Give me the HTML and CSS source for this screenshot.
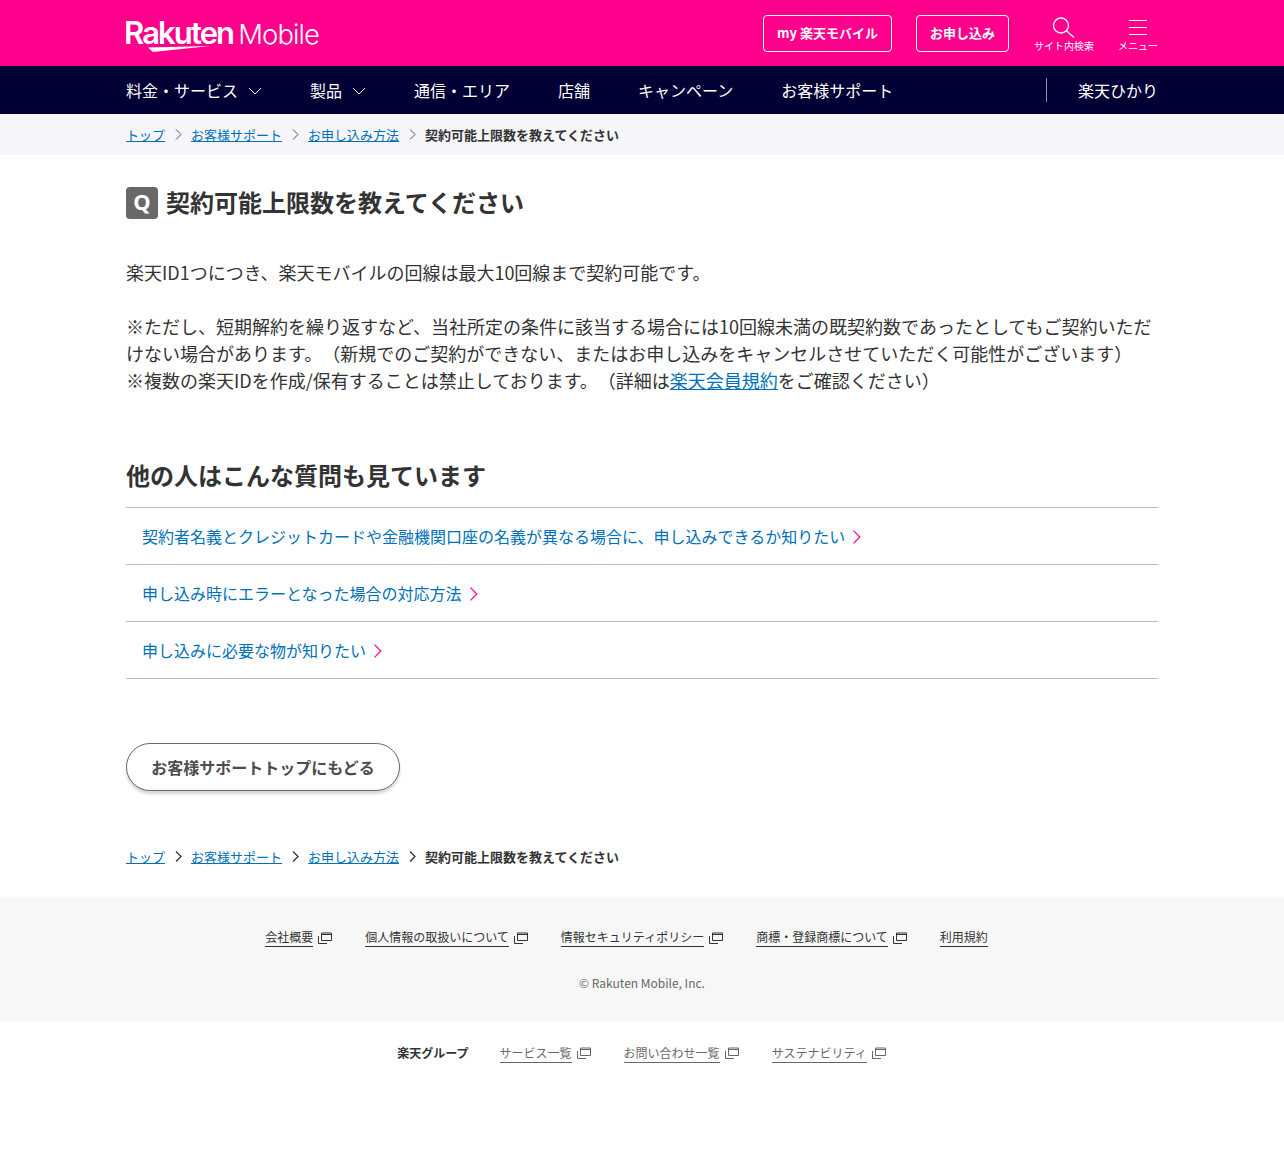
FILE: index.html
```html
<!DOCTYPE html>
<html lang="ja">
<head>
<meta charset="utf-8">
<title>契約可能上限数を教えてください</title>
<link rel="stylesheet" href="styles.css">
</head>
<body>
<header class="top">
  <div class="wrap top-in">
    <a class="logo" href="#"><span class="logo-r">Rakuten</span><span class="logo-m">Mobile</span>
      <svg class="swoosh" width="62" height="6" viewBox="0 0 62 6"><path d="M0 1.500 L62 0 L5 6 Z" fill="#fff"/></svg>
    </a>
    <div class="top-actions">
      <a class="tbtn tbtn-my" href="#">my 楽天モバイル</a>
      <a class="tbtn tbtn-apply" href="#">お申し込み</a>
      <a class="ticon ticon-search" href="#">
        <svg width="24" height="24" viewBox="0 0 24 24" fill="none" stroke="#fff" stroke-width="1.300"><circle cx="9" cy="11.500" r="7.500"/><path d="M14.500 17l7.500 6.500"/></svg>
        <span>サイト内検索</span>
      </a>
      <a class="ticon" href="#">
        <svg width="24" height="24" viewBox="0 0 24 24" fill="none" stroke="#fff" stroke-width="1.200"><path d="M3 6.500h18M3 13.500h18M3 20.500h18"/></svg>
        <span>メニュー</span>
      </a>
    </div>
  </div>
</header>
<nav class="gnav">
  <div class="wrap gnav-in">
    <a href="#">料金・サービス<svg class="chev" width="14" height="8" viewBox="0 0 14 8" fill="none" stroke="#fff"><path d="M1 1l6 6 6-6"/></svg></a>
    <a href="#">製品<svg class="chev" width="14" height="8" viewBox="0 0 14 8" fill="none" stroke="#fff"><path d="M1 1l6 6 6-6"/></svg></a>
    <a href="#">通信・エリア</a>
    <a href="#">店舗</a>
    <a href="#">キャンペーン</a>
    <a href="#">お客様サポート</a>
    <a class="gnav-hikari" href="#">楽天ひかり</a>
  </div>
</nav>
<div class="crumb-bar">
  <ol class="wrap crumbs">
    <li><a href="#">トップ</a></li>
    <li class="sep"><svg width="7" height="11" viewBox="0 0 7 11" fill="none" stroke="#555"><path d="M1 .5l5 5-5 5"/></svg></li>
    <li><a href="#">お客様サポート</a></li>
    <li class="sep"><svg width="7" height="11" viewBox="0 0 7 11" fill="none" stroke="#555"><path d="M1 .5l5 5-5 5"/></svg></li>
    <li><a href="#">お申し込み方法</a></li>
    <li class="sep"><svg width="7" height="11" viewBox="0 0 7 11" fill="none" stroke="#555"><path d="M1 .5l5 5-5 5"/></svg></li>
    <li class="cur">契約可能上限数を教えてください</li>
  </ol>
</div>
<main class="wrap">
  <h1 class="q-title"><span class="q-mark">Q</span>契約可能上限数を教えてください</h1>
  <div class="answer">
    <p>楽天ID1つにつき、楽天モバイルの回線は最大10回線まで契約可能です。</p>
    <p>※ただし、短期解約を繰り返すなど、当社所定の条件に該当する場合には10回線未満の既契約数であったとしてもご契約いただけない場合があります。（新規でのご契約ができない、またはお申し込みをキャンセルさせていただく可能性がございます）<br>※複数の楽天IDを作成/保有することは禁止しております。（詳細は<a href="#">楽天会員規約</a>をご確認ください）</p>
  </div>
  <h2 class="rel-title">他の人はこんな質問も見ています</h2>
  <ul class="rel-list">
    <li><a href="#">契約者名義とクレジットカードや金融機関口座の名義が異なる場合に、申し込みできるか知りたい<svg class="pink" width="9" height="14" viewBox="0 0 9 14" fill="none" stroke="#ff008c" stroke-width="1.200"><path d="M1.500 .7l6.300 6.300-6.300 6.300"/></svg></a></li>
    <li><a href="#">申し込み時にエラーとなった場合の対応方法<svg class="pink" width="9" height="14" viewBox="0 0 9 14" fill="none" stroke="#ff008c" stroke-width="1.200"><path d="M1.500 .7l6.300 6.300-6.300 6.300"/></svg></a></li>
    <li><a href="#">申し込みに必要な物が知りたい<svg class="pink" width="9" height="14" viewBox="0 0 9 14" fill="none" stroke="#ff008c" stroke-width="1.200"><path d="M1.500 .7l6.300 6.300-6.300 6.300"/></svg></a></li>
  </ul>
  <a class="back-btn" href="#">お客様サポートトップにもどる</a>
  <ol class="crumbs crumbs-low">
    <li><a href="#">トップ</a></li>
    <li class="sep"><svg width="7" height="11" viewBox="0 0 7 11" fill="none" stroke="#333" stroke-width="1.300"><path d="M1 .5l5 5-5 5"/></svg></li>
    <li><a href="#">お客様サポート</a></li>
    <li class="sep"><svg width="7" height="11" viewBox="0 0 7 11" fill="none" stroke="#333" stroke-width="1.300"><path d="M1 .5l5 5-5 5"/></svg></li>
    <li><a href="#">お申し込み方法</a></li>
    <li class="sep"><svg width="7" height="11" viewBox="0 0 7 11" fill="none" stroke="#333" stroke-width="1.300"><path d="M1 .5l5 5-5 5"/></svg></li>
    <li class="cur">契約可能上限数を教えてください</li>
  </ol>
</main>
<footer class="foot">
  <ul class="foot-links">
    <li><a href="#">会社概要</a><svg class="ext" width="14" height="12" viewBox="0 0 14 12" fill="none" stroke="#333"><path d="M.5 4v7.500h8.500M3.500 1h10v7.500h-10zM3.500 2.500h10"/></svg></li>
    <li><a href="#">個人情報の取扱いについて</a><svg class="ext" width="14" height="12" viewBox="0 0 14 12" fill="none" stroke="#333"><path d="M.5 4v7.500h8.500M3.500 1h10v7.500h-10zM3.500 2.500h10"/></svg></li>
    <li><a href="#">情報セキュリティポリシー</a><svg class="ext" width="14" height="12" viewBox="0 0 14 12" fill="none" stroke="#333"><path d="M.5 4v7.500h8.500M3.500 1h10v7.500h-10zM3.500 2.500h10"/></svg></li>
    <li><a href="#">商標・登録商標について</a><svg class="ext" width="14" height="12" viewBox="0 0 14 12" fill="none" stroke="#333"><path d="M.5 4v7.500h8.500M3.500 1h10v7.500h-10zM3.500 2.500h10"/></svg></li>
    <li><a href="#">利用規約</a></li>
  </ul>
  <p class="copy">© Rakuten Mobile, Inc.</p>
</footer>
<div class="group">
  <strong>楽天グループ</strong>
  <span class="g-item"><a href="#">サービス一覧</a><svg class="ext" width="14" height="12" viewBox="0 0 14 12" fill="none" stroke="#666"><path d="M.5 4v7.500h8.500M3.500 1h10v7.500h-10zM3.500 2.500h10"/></svg></span>
  <span class="g-item"><a href="#">お問い合わせ一覧</a><svg class="ext" width="14" height="12" viewBox="0 0 14 12" fill="none" stroke="#666"><path d="M.5 4v7.500h8.500M3.500 1h10v7.500h-10zM3.500 2.500h10"/></svg></span>
  <span class="g-item"><a href="#">サステナビリティ</a><svg class="ext" width="14" height="12" viewBox="0 0 14 12" fill="none" stroke="#666"><path d="M.5 4v7.500h8.500M3.500 1h10v7.500h-10zM3.500 2.500h10"/></svg></span>
</div>
</body>
</html>
```
FILE: styles.css
```css
* { box-sizing: border-box; }
html, body { margin: 0; padding: 0; }
body {
  min-height: 1173px;
  background: #fff;
  color: #333;
  font-family: "Noto Sans CJK JP", "Noto Sans", sans-serif;
  font-size: 16px;
  line-height: 1.5;
  text-spacing-trim: space-all;
}
a { color: inherit; text-decoration: none; }
ol, ul { list-style: none; margin: 0; padding: 0; }
p, h1, h2 { margin: 0; }
.wrap { width: 1032px; margin: 0 auto; }

.top { background: #ff008c; height: 66px; color: #fff; }
.top-in { height: 66px; display: flex; align-items: center; justify-content: space-between; }
.logo { position: relative; display: flex; align-items: baseline; width: 194px; height: 34px; color: #fff; line-height: 34px; margin-left: -2px; }
.logo-r { font-family: "Inter", sans-serif; font-weight: 600; font-size: 31px; letter-spacing: -1.900px; }
.logo-m { font-family: "Inter", sans-serif; font-weight: 300; font-size: 27.500px; letter-spacing: -.9px; margin-left: 5px; }
.swoosh { position: absolute; left: 24px; top: 30px; }
.top-actions { display: flex; align-items: center; }
.tbtn { display: block; height: 37px; line-height: 34px; padding: 0 13px; border: 1px solid #fff; border-radius: 4px; font-size: 13px; font-weight: 700; color: #fff; }
.tbtn-apply { margin-left: 24px; }
.ticon { display: flex; flex-direction: column; align-items: center; width: 60px; font-size: 10px; line-height: 14px; color: #fff; margin-top: 1px; }
.ticon svg { display: block; margin-bottom: 1px; }
.ticon-search { margin-left: 25px; margin-right: 24px; }
.ticon:last-child { width: 40px; margin-right: 0; }

.gnav { background: #000035; height: 48px; color: #fff; }
.gnav-in { height: 48px; display: flex; align-items: center; gap: 48px; }
.gnav-in a { display: flex; align-items: center; line-height: 24px; }
.chev { margin-left: 10px; margin-top: 1px; }
.gnav-in .gnav-hikari { margin-left: auto; padding-left: 31px; border-left: 1px solid #8f8fa8; }

.crumb-bar { background: #f5f5fa; height: 41px; }
.crumbs { display: flex; align-items: center; height: 41px; font-size: 13px; line-height: 19px; }
.crumbs a { color: #0071b9; text-decoration: underline; }
.crumbs .cur { font-weight: 700; }
.crumbs .sep { display: flex; margin: 0 9px 0 10px; }

.q-title { display: flex; align-items: flex-start; margin-top: 32px; height: 32px; font-size: 24px; font-weight: 700; line-height: 30px; }
.q-mark { display: flex; align-items: center; justify-content: center; width: 32px; height: 32px; margin-right: 8px; padding-bottom: 4px; border-radius: 4px; background: #686868; color: #fff; font-family: "Noto Sans", sans-serif; font-size: 22px; font-weight: 700; line-height: 1; }
.answer { margin-top: 40px; font-size: 18px; line-height: 27px; }
.answer p + p { margin-top: 27px; }
.answer a { color: #0071b9; text-decoration: underline; }
.rel-title { margin-top: 63px; font-size: 24px; font-weight: 700; line-height: 36px; }
.rel-list { margin-top: 14px; border-top: 1px solid #bbb; }
.rel-list li { border-bottom: 1px solid #bbb; height: 57px; display: flex; align-items: center; padding-left: 16px; }
.rel-list a { color: #0071b9; line-height: 24px; display: flex; align-items: center; }
.pink { margin-left: 7px; margin-top: 1px; }
.back-btn { display: flex; align-items: center; justify-content: center; width: 274px; height: 48px; margin-top: 64px; padding-bottom: 1px; border: 1px solid #686868; border-radius: 24px; background: #fff; color: #4d4d4d; font-weight: 700; box-shadow: 0 3px 3px rgba(0,0,0,.16); }
.crumbs-low { margin-top: 45px; height: 41px; width: 1032px; }

.foot { margin-top: 20px; background: #f7f7f7; height: 124px; padding-top: 31px; }
.foot-links { display: flex; justify-content: center; padding-right: 31px; font-size: 12px; line-height: 22px; }
.foot-links li { display: flex; align-items: center; margin: 0 16.500px; }
.foot-links a { border-bottom: 1px solid #333; line-height: 18px; }
.ext { margin-left: 5px; }
.copy { margin-top: 27px; text-align: center; font-size: 12px; line-height: 18px; color: #686868; }
.group { display: flex; justify-content: center; align-items: center; gap: 33px; padding-top: 22px; padding-right: 1px; font-size: 12px; line-height: 20px; color: #686868; }
.group strong { color: #333; margin-right: -2px; }
.g-item { display: flex; align-items: center; }
.g-item a { border-bottom: 1px solid #686868; line-height: 18px; }
```
